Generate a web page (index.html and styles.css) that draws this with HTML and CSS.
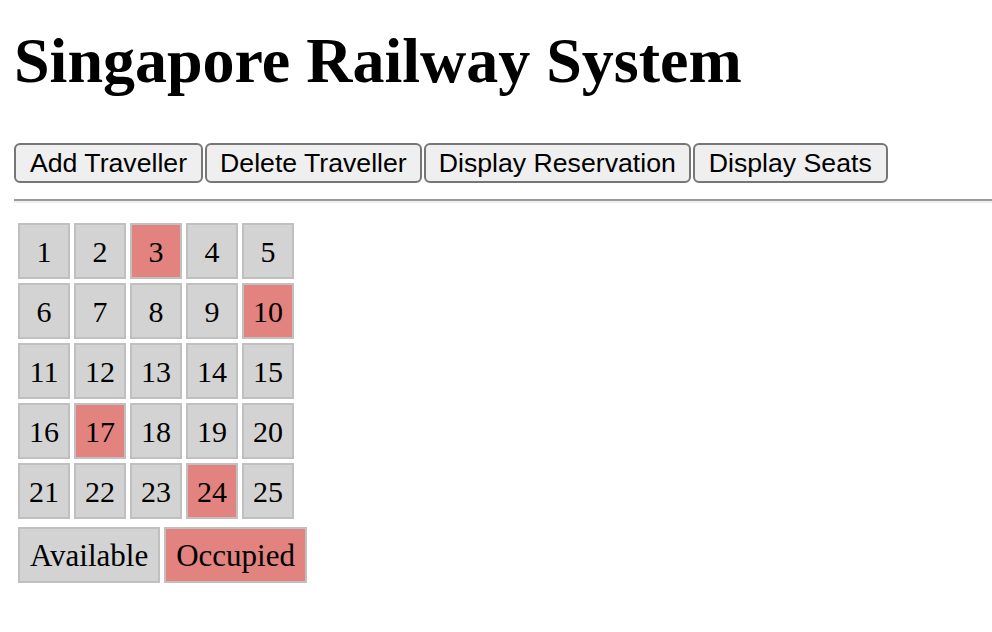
FILE: index.html
```html
<!DOCTYPE html>
<html>
<head>
<meta charset="utf-8">
<title>Singapore Railway System</title>
<link rel="stylesheet" href="styles.css">
</head>
<body>
<h1 class="title">Singapore Railway System</h1>
<div class="toolbar">
  <button class="btn btn-add">Add Traveller</button>
  <button class="btn">Delete Traveller</button>
  <button class="btn">Display Reservation</button>
  <button class="btn btn-seats">Display Seats</button>
</div>
<hr class="divider">
<table class="seats">
  <tr><td class="seat">1</td><td class="seat">2</td><td class="seat occupied">3</td><td class="seat">4</td><td class="seat">5</td></tr>
  <tr><td class="seat">6</td><td class="seat">7</td><td class="seat">8</td><td class="seat">9</td><td class="seat occupied">10</td></tr>
  <tr><td class="seat">11</td><td class="seat">12</td><td class="seat">13</td><td class="seat">14</td><td class="seat">15</td></tr>
  <tr><td class="seat">16</td><td class="seat occupied">17</td><td class="seat">18</td><td class="seat">19</td><td class="seat">20</td></tr>
  <tr><td class="seat">21</td><td class="seat">22</td><td class="seat">23</td><td class="seat occupied">24</td><td class="seat">25</td></tr>
</table>
<table class="legend">
  <tr><td class="key">Available</td><td class="key occupied">Occupied</td></tr>
</table>
</body>
</html>
```

FILE: styles.css
```css
html, body {
  background: #ffffff;
}
body {
  margin: 0;
  padding: 0 0 0 14px;
  font-family: "Liberation Serif", "Times New Roman", serif;
  color: #000;
  overflow: hidden;
}
.title {
  font-family: "Liberation Serif", "Times New Roman", serif;
  font-weight: bold;
  font-size: 64px;
  line-height: 73px;
  margin: 24px 0 46px 0;
}
.toolbar {
  display: flex;
  gap: 2px;
}
.btn {
  font-family: "Liberation Sans", Arial, sans-serif;
  font-size: 26.67px;
  line-height: 30px;
  color: #000;
  background: #efefef;
  border: 2px solid #767676;
  border-radius: 6px;
  padding: 3px 13px;
  margin: 0;
  height: 40px;
}
.btn-add, .btn-seats {
  padding: 3px 14px;
}
.divider {
  margin: 16px 0 16px 0;
  border: none;
  border-top: 2px solid #9a9a9a;
  border-bottom: 2px solid #eeeeee;
  height: 0;
}
.seats, .legend {
  border-collapse: separate;
  border-spacing: 4px;
}
.seat, .key {
  background: #d3d3d3;
  border: 2px solid #c0c0c0;
  font-size: 30px;
  line-height: 35px;
  padding: 8.5px 9px;
  text-align: center;
}
.seat {
  width: 30px;
}
.key {
  font-size: 31px;
  padding: 8.5px 10px;
}
.occupied {
  background: #e2837f;
}
```
